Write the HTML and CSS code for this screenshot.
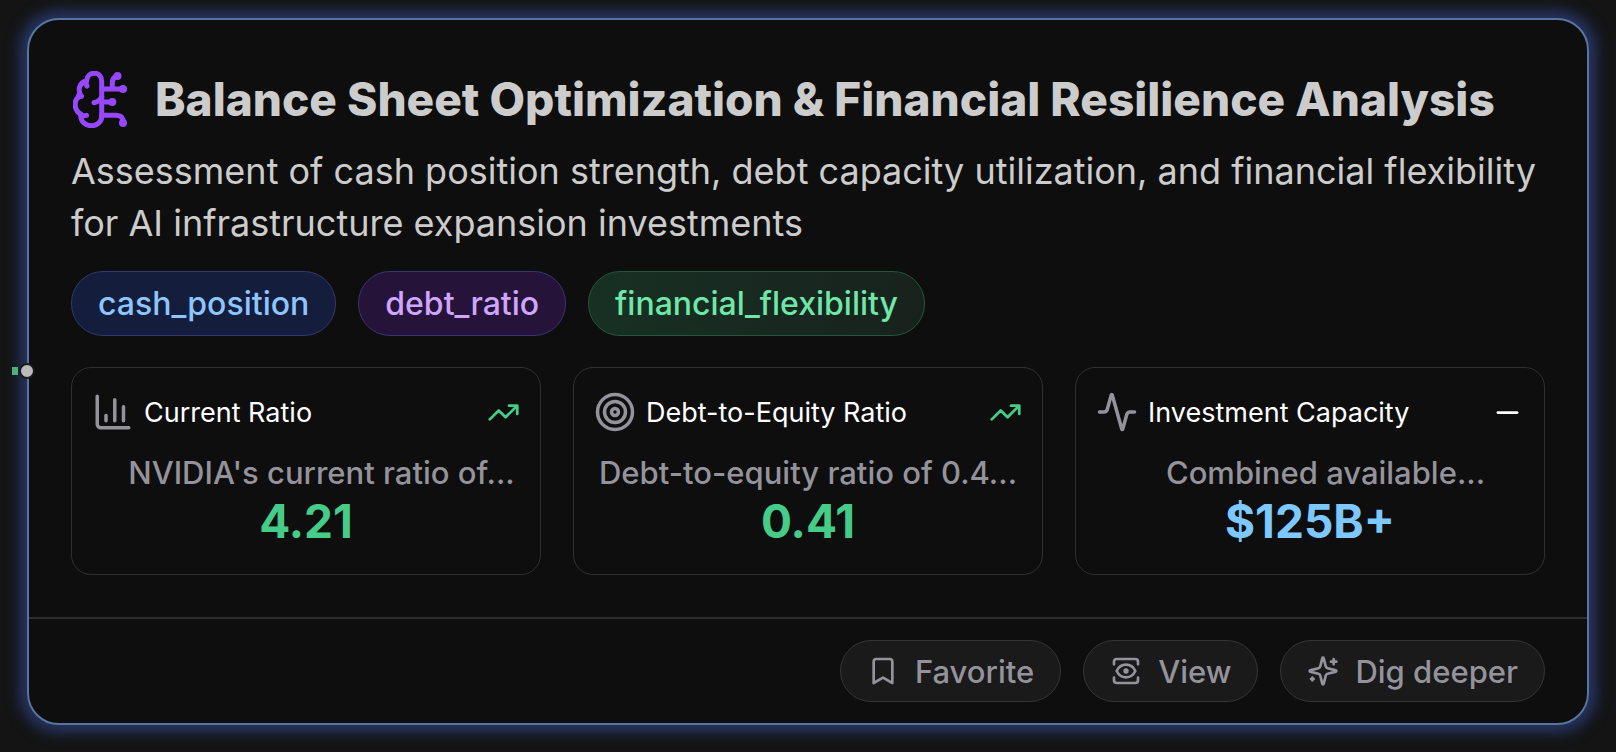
FILE: index.html
```html
<!DOCTYPE html>
<html lang="en">
<head>
<meta charset="UTF-8">
<meta name="viewport" content="width=device-width, initial-scale=1.0">
<title>Balance Sheet Optimization</title>
<link rel="stylesheet" href="styles.css">
</head>
<body>

<article class="card">
    <span class="edge"></span>
    <span class="handle"></span>

    <div class="card-body">
        <header class="card-header">
            <svg class="brain" viewBox="0 0 54 57">
                <path d="M28.700 10.500V45.500C28.700 51 24 54.700 18.500 54.700C12.500 54.700 7.700 50.500 7.700 44.500V43C4 41 2.200 37.500 2.200 33.500C2.200 29.500 4.300 26 8 24.800C4 18 7 11.500 13.700 9.500C14 5 17.500 2.200 21.500 2.200C25.700 2.200 28.700 5.500 28.700 10.500"/>
                <path d="M13.500 9.500C12.700 11.500 13 13.500 14 15M5.500 24.500L8.500 25.300M7.700 43.500C9.500 44.700 11.500 44.900 13.500 44.300M28.700 26C27 29 24.500 31 21 31.700"/>
                <path d="M28.700 17.900H50M39.300 17.900V12C39.300 8.500 41 6 44.300 5M28.700 31H39.300M28.700 44.200H43C48 44.200 50.300 47 50.300 52"/>
                <g class="dots">
                    <circle cx="44.500" cy="5" r="4"/>
                    <circle cx="50" cy="17.900" r="4"/>
                    <circle cx="39.300" cy="31" r="4"/>
                    <circle cx="50" cy="52" r="4"/>
                </g>
            </svg>
            <h1>Balance Sheet Optimization &amp; Financial Resilience Analysis</h1>
        </header>

        <p class="summary">Assessment of cash position strength, debt capacity utilization, and financial flexibility for AI infrastructure expansion investments</p>

        <ul class="tags">
            <li class="tag blue">cash_position</li>
            <li class="tag purple">debt_ratio</li>
            <li class="tag green">financial_flexibility</li>
        </ul>

        <div class="metrics">
            <section class="metric">
                <div class="metric-head">
                    <svg class="metric-icon" viewBox="0 0 24 24">
                        <path d="M3 3v16a2 2 0 0 0 2 2h16M18 17V9M13 17V5M8 17v-3"/>
                    </svg>
                    <h2>Current Ratio</h2>
                    <svg class="trend up" viewBox="0 0 24 24">
                        <path d="M16 7h6v6M22 7l-8.500 8.500-5-5L2 17"/>
                    </svg>
                </div>
                <p class="metric-note">NVIDIA's current ratio of<span class="more">...</span></p>
                <p class="metric-value up">4.21</p>
            </section>

            <section class="metric">
                <div class="metric-head">
                    <svg class="metric-icon" viewBox="0 0 24 24">
                        <circle cx="12" cy="12" r="10"/>
                        <circle cx="12" cy="12" r="6"/>
                        <circle cx="12" cy="12" r="2"/>
                    </svg>
                    <h2>Debt-to-Equity Ratio</h2>
                    <svg class="trend up" viewBox="0 0 24 24">
                        <path d="M16 7h6v6M22 7l-8.500 8.500-5-5L2 17"/>
                    </svg>
                </div>
                <p class="metric-note">Debt-to-equity ratio of 0.4...</p>
                <p class="metric-value up">0.41</p>
            </section>

            <section class="metric">
                <div class="metric-head">
                    <svg class="metric-icon" viewBox="0 0 24 24">
                        <path d="M22 12h-2.480a2 2 0 0 0-1.930 1.460l-2.350 8.360a.25.25 0 0 1-.48 0L9.240 2.180a.25.25 0 0 0-.48 0l-2.350 8.360A2 2 0 0 1 4.490 12H2"/>
                    </svg>
                    <h2>Investment Capacity</h2>
                    <svg class="trend" viewBox="0 0 24 24">
                        <path d="M5 12h14"/>
                    </svg>
                </div>
                <p class="metric-note">Combined available<span class="more">...</span></p>
                <p class="metric-value info">$125B+</p>
            </section>
        </div>
    </div>

    <footer class="card-footer">
        <button type="button">
            <svg viewBox="0 0 24 24"><path d="m19 21-7-4-7 4V5a2 2 0 0 1 2-2h10a2 2 0 0 1 2 2v16z"/></svg>
            Favorite
        </button>
        <button type="button">
            <svg viewBox="0 0 24 24">
                <path d="M3 7V5a2 2 0 0 1 2-2h14a2 2 0 0 1 2 2v2M3 17v2a2 2 0 0 0 2 2h14a2 2 0 0 0 2-2v-2"/>
                <path d="M5 12C8 5.700 16 5.700 19 12C16 18.300 8 18.300 5 12z"/>
                <circle cx="12" cy="12" r="1"/>
            </svg>
            View
        </button>
        <button type="button">
            <svg viewBox="0 0 24 24">
                <path d="M9.940 15.500A2 2 0 0 0 8.500 14.060l-6.140-1.580a.5.5 0 0 1 0-.96L8.500 9.940A2 2 0 0 0 9.940 8.500l1.580-6.140a.5.5 0 0 1 .96 0L14.060 8.500A2 2 0 0 0 15.500 9.940l6.140 1.580a.5.5 0 0 1 0 .96L15.500 14.060a2 2 0 0 0-1.440 1.440l-1.580 6.140a.5.5 0 0 1-.96 0z"/>
                <path d="M20 3v4M22 5h-4M4 17v2M5 18H3"/>
            </svg>
            Dig deeper
        </button>
    </footer>
</article>

</body>
</html>
```
FILE: styles.css
```css
* {
  box-sizing: border-box;
}
body {
  margin: 0;
  padding: 18px 27px 27px;
  background: #141414;
  color: #cccccc;
  font-family: Inter, "Liberation Sans", sans-serif;
}
h1, h2, p, ul {
  margin: 0;
  padding: 0;
  font-weight: 400;
}
svg {
  flex: none;
  fill: none;
  stroke: currentColor;
  stroke-width: 2;
  stroke-linecap: round;
  stroke-linejoin: round;
}
.card {
  position: relative;
  border: 2px solid #58749f;
  border-radius: 32px;
  background: #0e0e0e;
  box-shadow: 0 0 14px 8px #263461;
}
.card-body {
  padding: 42px;
}
.edge, .handle {
  position: absolute;
  top: 351px;
}
.edge {
  left: -17px;
  width: 6px;
  height: 8px;
  margin-top: -4px;
  background: #4caf7c;
}
.handle {
  left: -10px;
  width: 16px;
  height: 16px;
  margin-top: -8px;
  border: 2px solid #1a1a1a;
  border-radius: 50%;
  background: #bbbbbb;
}
.card-header {
  display: flex;
  align-items: center;
  gap: 28px;
  height: 74px;
  padding-left: 2px;
}
.brain {
  width: 54px;
  height: 57px;
  color: #9747ff;
  stroke-width: 5;
}
.dots {
  fill: currentColor;
  stroke: none;
}
.card-header h1 {
  font-size: 46px;
  font-weight: 800;
  line-height: 60px;
  white-space: nowrap;
}
.summary {
  padding: 9px 0 8px;
  font-size: 36px;
  line-height: 52px;
}
.tags {
  display: flex;
  gap: 22px;
  padding-top: 14px;
  list-style: none;
}
.tag {
  padding: 0 26px;
  border: 1px solid #353672;
  border-radius: 32px;
  font-size: 32px;
  font-weight: 500;
  line-height: 63px;
}
.tag.blue {
  background: #151d3d;
  color: #8ec5ff;
}
.tag.purple {
  background: #26133a;
  color: #cfa5ff;
}
.tag.green {
  border-color: #22573d;
  background: linear-gradient(90deg, #183024, #18221d);
  color: #6ee7a8;
}
.metrics {
  display: grid;
  grid-template-columns: repeat(3, minmax(0, 1fr));
  gap: 32px;
  margin-top: 31px;
}
.metric {
  padding: 22px 20px 25px;
  border: 1px solid #303034;
  border-radius: 20px;
}
.metric-head {
  display: flex;
  align-items: center;
  gap: 10px;
  height: 44px;
}
.metric-icon {
  width: 42px;
  height: 42px;
  color: #94939c;
}
.metric-head h2 {
  flex: 1;
  color: #ffffff;
  font-size: 27px;
}
.trend {
  width: 33px;
  height: 33px;
  color: #ffffff;
}
.metric-note {
  overflow: hidden;
  padding-top: 19px;
  color: #94939c;
  font-size: 31px;
  font-weight: 500;
  line-height: 40px;
  text-align: center;
  white-space: nowrap;
}
/* dots hang past the centered text */
.more {
  margin-right: -1em;
}
.metric-value {
  font-size: 46px;
  font-weight: 700;
  line-height: 56px;
  text-align: center;
}
.up {
  color: #44cc88;
}
.metric-value.info {
  color: #7cc8ff;
}
.card-footer {
  display: flex;
  justify-content: flex-end;
  gap: 22px;
  padding: 21px 42px;
  border-top: 2px solid #2d2d2f;
}
.card-footer button {
  display: flex;
  align-items: center;
  gap: 16px;
  height: 62px;
  padding: 0 26px;
  border: 1px solid #353538;
  border-radius: 31px;
  background: #1a1a1a;
  color: #94939c;
  font-family: inherit;
  font-size: 31px;
  font-weight: 500;
}
.card-footer svg {
  width: 32px;
  height: 32px;
}
```
